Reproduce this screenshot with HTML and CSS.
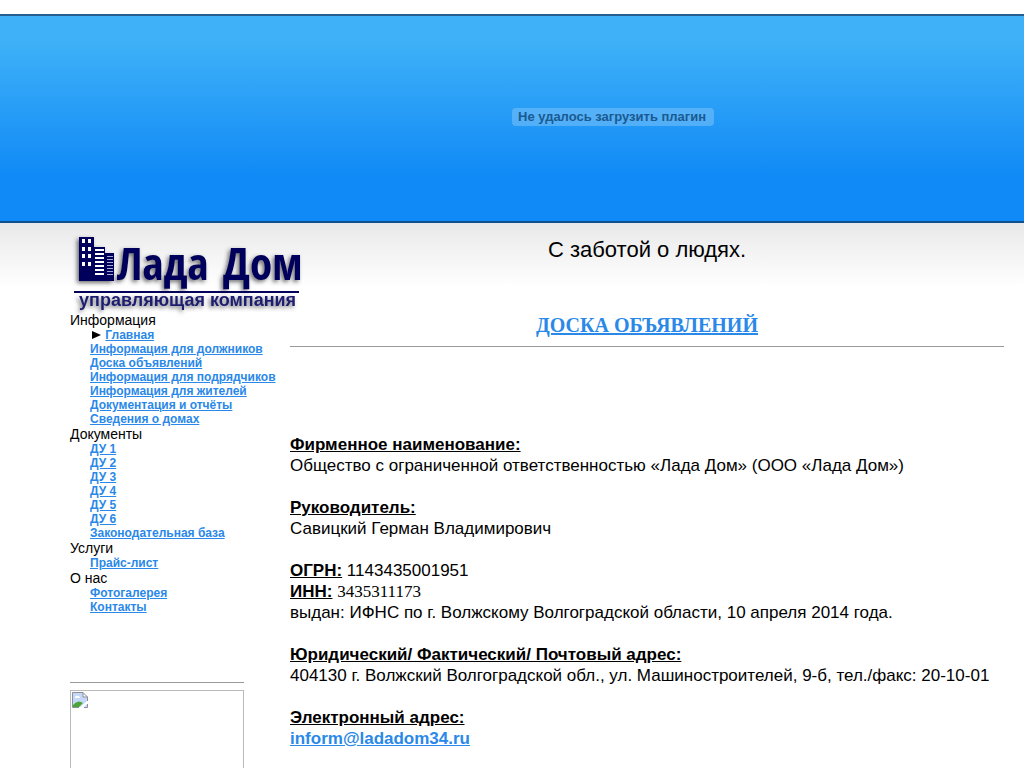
FILE: index.html
```
<!DOCTYPE html>
<html lang="ru">
<head>
<meta charset="utf-8">
<meta name="viewport" content="width=device-width, initial-scale=1">
<title>Лада Дом</title>
<link rel="stylesheet" href="styles.css">
</head>
<body>
<header class="banner"><span class="plugin">Не удалось загрузить плагин</span></header>
<div class="page">
  <aside class="sidebar">
    <svg class="logo" width="230" height="80" viewBox="0 0 230 80" role="img" aria-label="Лада Дом, управляющая компания">
      <defs><filter id="shade" x="-10%" y="-10%" width="120%" height="120%"><feDropShadow dx="-2" dy="2" stdDeviation="2" flood-color="#333" flood-opacity=".7"/></filter></defs>
      <g filter="url(#shade)">
        <path fill="#03035c" d="M9 5h15v44H9zM24 15h11v34H24zM35 21h9v28h-9z"/>
        <path fill="#fff" d="M12 7h3v4h-3zM18 7h3v4h-3zM12 15h3v4h-3zM18 15h3v4h-3zM12 22h3v4h-3zM18 22h3v4h-3zM12 30h3v4h-3zM18 30h3v4h-3zM25 17h9v2h-9zM25 21h9v2h-9zM25 25h9v2h-9zM25 29h9v2h-9zM25 33h9v2h-9zM25 37h9v2h-9zM25 41h9v2h-9z"/>
        <path stroke="#a9a9cf" d="M37 24.500h6M37 27.500h6M37 30.500h6M37 33.500h6M37 36.500h6M37 39.500h6M37 42.500h6"/>
        <text class="logo-name" x="47" y="48">Лада</text>
        <text class="logo-name" x="153" y="48">Дом</text>
        <text class="logo-sub" x="9" y="74">управляющая компания</text>
      </g>
      <path fill="#03035c" d="M4 59h225v2H4z"/>
    </svg>
    <nav class="menu">
      <div class="menu-title">Информация</div>
      <ul class="links">
        <li><svg class="arrow" width="11" height="9" viewBox="0 0 11 9" aria-hidden="true"><path d="M1 1l9 4-9 4z"/></svg> <a href="#">Главная</a></li>
        <li><a href="#">Информация для должников</a></li>
        <li><a href="#">Доска объявлений</a></li>
        <li><a href="#">Информация для подрядчиков</a></li>
        <li><a href="#">Информация для жителей</a></li>
        <li><a href="#">Документация и отчёты</a></li>
        <li><a href="#">Сведения о домах</a></li>
      </ul>
      <div class="menu-title">Документы</div>
      <ul class="links">
        <li><a href="#">ДУ 1</a></li>
        <li><a href="#">ДУ 2</a></li>
        <li><a href="#">ДУ 3</a></li>
        <li><a href="#">ДУ 4</a></li>
        <li><a href="#">ДУ 5</a></li>
        <li><a href="#">ДУ 6</a></li>
        <li><a href="#">Законодательная база</a></li>
      </ul>
      <div class="menu-title">Услуги</div>
      <ul class="links"><li><a href="#">Прайс-лист</a></li></ul>
      <div class="menu-title">О нас</div>
      <ul class="links">
        <li><a href="#">Фотогалерея</a></li>
        <li><a href="#">Контакты</a></li>
      </ul>
    </nav>
    <hr class="rule side-rule">
    <div class="picture">
      <svg width="16" height="16" viewBox="0 0 16 16" aria-hidden="true">
        <path fill="#c5d8f7" d="M1 1h10l4 4v10H1z"/>
        <path fill="#fff" d="M3 5q1-2 3-1 2 0 2 2H3zM11 1v4h4z"/>
        <path fill="#4ba53a" d="M1 15v-2q4-5 8-3l2 1-4 4z"/>
        <path fill="#fff" d="M7 16l8-7v3l-4 4z"/>
        <path fill="none" stroke="#8b8f98" d="M7 15.500H.500V.500H11l4.500 4.500v4M11 .500V5h4.500M12 15.500h3.500V12"/>
      </svg>
    </div>
  </aside>
  <main class="content">
    <p class="slogan">С заботой о людях.</p>
    <h1 class="board"><a href="#">ДОСКА ОБЪЯВЛЕНИЙ</a></h1>
    <hr class="rule">
    <div class="details">
      <p><b>Фирменное наименование:</b><br>Общество с ограниченной ответственностью «Лада Дом» (ООО «Лада Дом»)</p>
      <p><b>Руководитель:</b><br>Савицкий Герман Владимирович</p>
      <p><b>ОГРН:</b> 1143435001951<br><b>ИНН:</b> <span class="serif">3435311173</span><br>выдан: ИФНС по г. Волжскому Волгоградской области, 10 апреля 2014 года.</p>
      <p><b>Юридический/ Фактический/ Почтовый адрес:</b><br>404130 г. Волжский Волгоградской обл., ул. Машиностроителей, 9-б, тел./факс: 20-10-01</p>
      <p><b>Электронный адрес:</b><br><a class="mail" href="mailto:inform@ladadom34.ru">inform@ladadom34.ru</a></p>
    </div>
  </main>
</div>
</body>
</html>
```
FILE: styles.css
```
* { box-sizing: border-box; }
body {
  margin: 0;
  padding-top: 14px;
  background: #fff;
  color: #000;
  font-family: "Liberation Sans", Arial, sans-serif;
}
p, h1, ul { margin: 0; padding: 0; }
a { color: #2a88e8; }
.banner {
  height: 209px;
  padding: 92px 0 0 50%;
  border-top: 2px solid #265f8f;
  border-bottom: 2px solid #10508f;
  background: linear-gradient(#3fb1f8 0%, #3fb1f8 12%, #108af6 78%, #108af6 100%);
}
.plugin {
  display: inline-block;
  padding: 0 8px 0 6px;
  border-radius: 4px;
  background: rgba(255, 255, 255, .22);
  color: #195a91;
  font-size: 13px;
  font-weight: bold;
  line-height: 18px;
  vertical-align: top;
}
.page {
  display: grid;
  grid-template-columns: 174px minmax(0, 1fr);
  gap: 46px;
  padding: 9px 20px 24px 70px;
  background: linear-gradient(#e9e9e9, #fff 64px);
}
.logo { display: block; overflow: visible; }
.logo-name {
  fill: #03035c;
  font-family: "Liberation Sans Narrow", "Open Sans Condensed", "DejaVu Sans Condensed", sans-serif;
  font-size: 45px;
  font-weight: bold;
}
.logo-sub { fill: #1c1c70; font-size: 18px; font-weight: bold; }
.menu { white-space: nowrap; }
.menu-title { font-size: 14px; line-height: 16px; }
.links {
  padding-left: 20px;
  list-style: none;
  font-size: 12px;
  font-weight: bold;
  line-height: 14px;
}
.arrow { margin-left: 1px; }
.rule { margin: 0; border: 0; border-top: 1px solid #999; }
.side-rule { margin-top: 68px; }
.picture {
  height: 174px;
  margin-top: 7px;
  padding: 1px;
  border: 1px solid #bbb;
}
.slogan { padding-top: 5px; font-size: 22px; line-height: 26px; text-align: center; }
.board {
  margin-top: 51px;
  font-family: "Liberation Serif", "Times New Roman", serif;
  font-size: 20px;
  line-height: 22px;
  text-align: center;
}
.content .rule { margin-top: 10px; }
.details { margin-top: 87px; font-size: 17px; line-height: 21px; }
.details p { margin-bottom: 21px; }
.details b { text-decoration: underline; }
.serif { font-family: "Liberation Serif", "Times New Roman", serif; }
.mail { font-weight: bold; }
```
